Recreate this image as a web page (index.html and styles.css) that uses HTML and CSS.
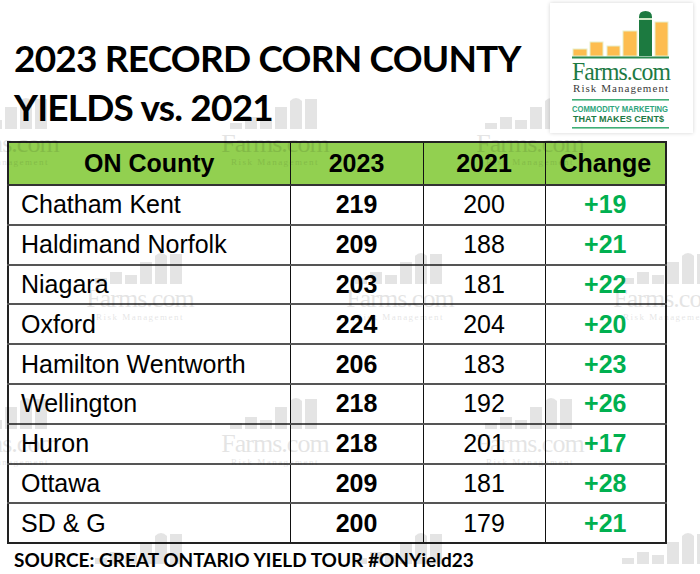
FILE: index.html
```html
<!DOCTYPE html>
<html>
<head>
<meta charset="utf-8">
<link rel="stylesheet" href="styles.css">
</head>
<body>
<div class="page">
  <header class="top">
    <h1 class="title">2023 RECORD CORN COUNTY<br>YIELDS vs. 2021</h1>
    <div class="logo">
      <svg width="143" height="133" viewBox="0 0 143 133">
        <g stroke="#e8efc9" stroke-width="1">
          <rect x="23" y="49" width="14" height="7" fill="#fdbd4f"/>
          <rect x="40" y="42" width="13" height="14" fill="#fdbd4f"/>
          <rect x="57" y="46" width="13" height="10" fill="#fdbd4f"/>
          <rect x="73" y="31" width="14" height="25" fill="#fdbd4f"/>
          <rect x="105" y="22" width="13" height="34" fill="#fdbd4f"/>
        </g>
        <path d="M89 56 V17 Q89 11 95.5 11 Q102 11 102 17 V56 Z" fill="#1c7a40"/>
        <rect x="89" y="18" width="13" height="2" fill="#cfe8c7"/>
        <rect x="22" y="56.5" width="97" height="2" fill="#2c8a4f"/>
        <text x="22" y="80" class="lg-farms" textLength="98" lengthAdjust="spacingAndGlyphs">Farms.com</text>
        <text x="23" y="92" class="lg-risk" textLength="95" lengthAdjust="spacing">Risk Management</text>
        <rect x="22" y="99" width="97" height="1.6" fill="#3fae76"/>
        <text x="22" y="112" class="lg-comm" textLength="96" lengthAdjust="spacingAndGlyphs">COMMODITY MARKETING</text>
        <text x="23" y="122" class="lg-cents" textLength="91" lengthAdjust="spacingAndGlyphs">THAT MAKES CENT$</text>
        <rect x="22" y="127" width="97" height="1.6" fill="#3fae76"/>
      </svg>
    </div>
  </header>

  <table class="yields">
    <colgroup>
      <col class="c1"><col class="c2"><col class="c3"><col class="c4">
    </colgroup>
    <thead>
      <tr><th>ON County</th><th>2023</th><th>2021</th><th>Change</th></tr>
    </thead>
    <tbody>
      <tr><td class="name">Chatham Kent</td><td class="y23">219</td><td class="y21">200</td><td class="chg">+19</td></tr>
      <tr><td class="name">Haldimand Norfolk</td><td class="y23">209</td><td class="y21">188</td><td class="chg">+21</td></tr>
      <tr><td class="name">Niagara</td><td class="y23">203</td><td class="y21">181</td><td class="chg">+22</td></tr>
      <tr><td class="name">Oxford</td><td class="y23">224</td><td class="y21">204</td><td class="chg">+20</td></tr>
      <tr><td class="name">Hamilton Wentworth</td><td class="y23">206</td><td class="y21">183</td><td class="chg">+23</td></tr>
      <tr><td class="name">Wellington</td><td class="y23">218</td><td class="y21">192</td><td class="chg">+26</td></tr>
      <tr><td class="name">Huron</td><td class="y23">218</td><td class="y21">201</td><td class="chg">+17</td></tr>
      <tr><td class="name">Ottawa</td><td class="y23">209</td><td class="y21">181</td><td class="chg">+28</td></tr>
      <tr><td class="name">SD &amp; G</td><td class="y23">200</td><td class="y21">179</td><td class="chg">+21</td></tr>
    </tbody>
  </table>

  <p class="source">SOURCE: GREAT ONTARIO YIELD TOUR #ONYield23</p>

  <div class="wm" style="left:-50px;top:95px"><svg width="110" height="36" viewBox="0 0 110 36"><rect x="10" y="28" width="12" height="6"/><rect x="25" y="22" width="12" height="12"/><rect x="40" y="25" width="12" height="9"/><rect x="55" y="12" width="12" height="22"/><path d="M70 34V6Q76 0 82 6V34Z"/><rect x="85" y="4" width="12" height="30"/></svg><span class="wm-f">Farms.com</span><span class="wm-r">Risk Management</span></div>
  <div class="wm" style="left:220px;top:95px"><svg width="110" height="36" viewBox="0 0 110 36"><rect x="10" y="28" width="12" height="6"/><rect x="25" y="22" width="12" height="12"/><rect x="40" y="25" width="12" height="9"/><rect x="55" y="12" width="12" height="22"/><path d="M70 34V6Q76 0 82 6V34Z"/><rect x="85" y="4" width="12" height="30"/></svg><span class="wm-f">Farms.com</span><span class="wm-r">Risk Management</span></div>
  <div class="wm" style="left:475px;top:95px"><svg width="110" height="36" viewBox="0 0 110 36"><rect x="10" y="28" width="12" height="6"/><rect x="25" y="22" width="12" height="12"/><rect x="40" y="25" width="12" height="9"/><rect x="55" y="12" width="12" height="22"/><path d="M70 34V6Q76 0 82 6V34Z"/><rect x="85" y="4" width="12" height="30"/></svg><span class="wm-f">Farms.com</span><span class="wm-r">Risk Management</span></div>
  <div class="wm" style="left:85px;top:250px"><svg width="110" height="36" viewBox="0 0 110 36"><rect x="10" y="28" width="12" height="6"/><rect x="25" y="22" width="12" height="12"/><rect x="40" y="25" width="12" height="9"/><rect x="55" y="12" width="12" height="22"/><path d="M70 34V6Q76 0 82 6V34Z"/><rect x="85" y="4" width="12" height="30"/></svg><span class="wm-f">Farms.com</span><span class="wm-r">Risk Management</span></div>
  <div class="wm" style="left:345px;top:250px"><svg width="110" height="36" viewBox="0 0 110 36"><rect x="10" y="28" width="12" height="6"/><rect x="25" y="22" width="12" height="12"/><rect x="40" y="25" width="12" height="9"/><rect x="55" y="12" width="12" height="22"/><path d="M70 34V6Q76 0 82 6V34Z"/><rect x="85" y="4" width="12" height="30"/></svg><span class="wm-f">Farms.com</span><span class="wm-r">Risk Management</span></div>
  <div class="wm" style="left:612px;top:250px"><svg width="110" height="36" viewBox="0 0 110 36"><rect x="10" y="28" width="12" height="6"/><rect x="25" y="22" width="12" height="12"/><rect x="40" y="25" width="12" height="9"/><rect x="55" y="12" width="12" height="22"/><path d="M70 34V6Q76 0 82 6V34Z"/><rect x="85" y="4" width="12" height="30"/></svg><span class="wm-f">Farms.com</span><span class="wm-r">Risk Management</span></div>
  <div class="wm" style="left:-50px;top:395px"><svg width="110" height="36" viewBox="0 0 110 36"><rect x="10" y="28" width="12" height="6"/><rect x="25" y="22" width="12" height="12"/><rect x="40" y="25" width="12" height="9"/><rect x="55" y="12" width="12" height="22"/><path d="M70 34V6Q76 0 82 6V34Z"/><rect x="85" y="4" width="12" height="30"/></svg><span class="wm-f">Farms.com</span><span class="wm-r">Risk Management</span></div>
  <div class="wm" style="left:220px;top:395px"><svg width="110" height="36" viewBox="0 0 110 36"><rect x="10" y="28" width="12" height="6"/><rect x="25" y="22" width="12" height="12"/><rect x="40" y="25" width="12" height="9"/><rect x="55" y="12" width="12" height="22"/><path d="M70 34V6Q76 0 82 6V34Z"/><rect x="85" y="4" width="12" height="30"/></svg><span class="wm-f">Farms.com</span><span class="wm-r">Risk Management</span></div>
  <div class="wm" style="left:475px;top:395px"><svg width="110" height="36" viewBox="0 0 110 36"><rect x="10" y="28" width="12" height="6"/><rect x="25" y="22" width="12" height="12"/><rect x="40" y="25" width="12" height="9"/><rect x="55" y="12" width="12" height="22"/><path d="M70 34V6Q76 0 82 6V34Z"/><rect x="85" y="4" width="12" height="30"/></svg><span class="wm-f">Farms.com</span><span class="wm-r">Risk Management</span></div>
  <div class="wm" style="left:85px;top:530px"><svg width="110" height="36" viewBox="0 0 110 36"><rect x="10" y="28" width="12" height="6"/><rect x="25" y="22" width="12" height="12"/><rect x="40" y="25" width="12" height="9"/><rect x="55" y="12" width="12" height="22"/><path d="M70 34V6Q76 0 82 6V34Z"/><rect x="85" y="4" width="12" height="30"/></svg></div>
  <div class="wm" style="left:345px;top:530px"><svg width="110" height="36" viewBox="0 0 110 36"><rect x="10" y="28" width="12" height="6"/><rect x="25" y="22" width="12" height="12"/><rect x="40" y="25" width="12" height="9"/><rect x="55" y="12" width="12" height="22"/><path d="M70 34V6Q76 0 82 6V34Z"/><rect x="85" y="4" width="12" height="30"/></svg></div>
  <div class="wm" style="left:612px;top:530px"><svg width="110" height="36" viewBox="0 0 110 36"><rect x="10" y="28" width="12" height="6"/><rect x="25" y="22" width="12" height="12"/><rect x="40" y="25" width="12" height="9"/><rect x="55" y="12" width="12" height="22"/><path d="M70 34V6Q76 0 82 6V34Z"/><rect x="85" y="4" width="12" height="30"/></svg></div>
</div>
</body>
</html>
```

FILE: styles.css
```css
* { box-sizing: border-box; }
html, body { margin: 0; padding: 0; background: #fff; }
body { width: 700px; height: 574px; overflow: hidden; }
.page { position: relative; width: 700px; height: 574px; }

.top {
  display: flex;
  align-items: flex-start;
  height: 141px;
}
.title {
  margin: 0;
  padding: 33px 0 0 14px;
  font-family: Lato, "Open Sans", sans-serif;
  font-weight: 700;
  font-size: 37px;
  line-height: 49px;
  color: #000;
  letter-spacing: -0.8px;
}
.logo {
  margin-left: auto;
  margin-right: 7px;
  margin-top: 3px;
  width: 143px;
  height: 130px;
  background: #fff;
  box-shadow: 0 0 4px rgba(0,0,0,0.18);
  position: relative;
  z-index: 2;
}
.logo svg { display: block; margin-top: -3px; }
.lg-farms { font-family: "Liberation Serif", serif; font-size: 26px; fill: #1d7a44; letter-spacing: -1px; }
.lg-risk { font-family: "Liberation Serif", serif; font-size: 11px; fill: #3a3a3a; }
.lg-comm { font-family: "Liberation Sans", sans-serif; font-weight: 700; font-size: 8.5px; fill: #2ea57c; }
.lg-cents { font-family: "Liberation Sans", sans-serif; font-weight: 700; font-size: 9px; fill: #1d7a44; }

.yields {
  margin-left: 7px;
  width: 658px;
  border-collapse: collapse;
  table-layout: fixed;
  font-family: "Liberation Sans", Arial, sans-serif;
  font-size: 25px;
  color: #000;
  border: 2px solid #222;
}
.c1 { width: 282px; }
.c2 { width: 133px; }
.c3 { width: 122px; }
.c4 { width: 121px; }
.yields th {
  background: #92d050;
  font-weight: 700;
  height: 43px;
  padding: 0;
  text-align: center;
  border-left: 1.5px solid #111;
  border-bottom: 2px solid #333;
}
.yields td {
  height: 39.8px;
  padding: 0;
  text-align: center;
  border-left: 1.5px solid #111;
  border-bottom: 2px solid #555;
}
.yields th:first-child, .yields td:first-child { border-left: none; }
.yields tbody tr:last-child td { border-bottom: none; }
.yields td.name { text-align: left; padding-left: 12px; }
.yields td.y23 { font-weight: 700; }
.yields td.chg { font-weight: 700; color: #00b050; }

.source {
  margin: 4px 0 0 14px;
  font-family: Lato, "Open Sans", sans-serif;
  font-weight: 700;
  font-size: 19px;
  line-height: 24px;
  color: #000;
  letter-spacing: 0;
}

.wm {
  position: absolute;
  width: 110px;
  opacity: 0.1;
  pointer-events: none;
  z-index: 1;
  display: flex;
  flex-direction: column;
  align-items: center;
}
.wm svg { display: block; fill: #000; }
.wm-f { font-family: "Liberation Serif", serif; font-size: 26px; line-height: 26px; color: #000; letter-spacing: -1px; }
.wm-r { font-family: "Liberation Serif", serif; font-size: 9px; line-height: 10px; letter-spacing: 1.5px; color: #000; }
```
